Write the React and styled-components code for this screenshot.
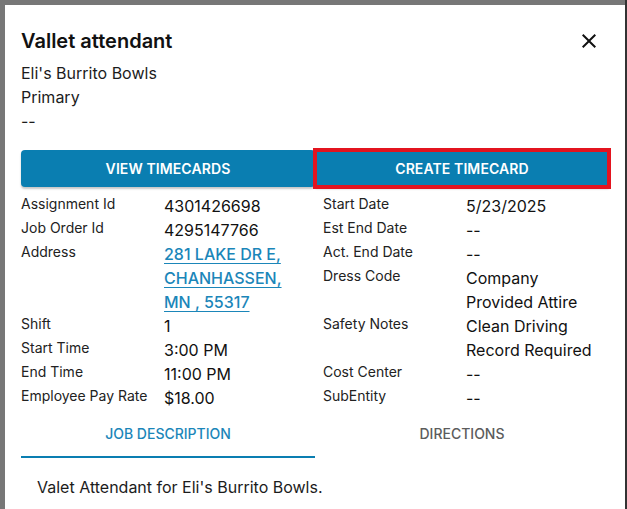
import React, { useState } from 'react';
import styled, { createGlobalStyle } from 'styled-components';

const GlobalStyle = createGlobalStyle`
  html, body {
    margin: 0;
    padding: 0;
    background: #777777;
    font-family: Inter, "Noto Sans", sans-serif;
    overflow: hidden;
  }
  * { box-sizing: border-box; }
`;

const Backdrop = styled.div`
  display: flex;
  height: 509px;
  padding: 5px 0 0 5px;
  background: #777777;
  overflow: hidden;
`;

const Dialog = styled.div`
  width: 620px;
  flex-shrink: 0;
  background: #fff;
  padding: 24px 16px 0 16px;
  color: #1c1c1c;
`;

const Edge = styled.div`
  flex: 1;
  background: #333;
  margin-top: -5px;
`;

const Header = styled.div`
  display: flex;
  align-items: center;
  justify-content: space-between;
`;

const Title = styled.h2`
  margin: 0;
  font-size: 20px;
  line-height: 24px;
  font-weight: 600;
  color: #111;
`;

const CloseButton = styled.button`
  display: flex;
  align-items: center;
  justify-content: center;
  width: 40px;
  height: 40px;
  margin: -8px 0;
  padding: 0;
  border: none;
  background: transparent;
  cursor: pointer;
  color: #111;
`;

const SubtitleGroup = styled.div`
  margin-top: 8px;
`;

const Subtitle = styled.div`
  font-size: 16px;
  line-height: 24px;
  color: #1c1c1c;
`;

const Actions = styled.div`
  display: grid;
  grid-template-columns: 1fr 1fr;
  margin-top: 17px;
`;

const ActionButton = styled.button`
  height: 37px;
  border: none;
  border-radius: ${({ $focused }) => ($focused ? '0' : '4px')};
  background: #0a7eb1;
  color: #fff;
  font-family: Inter, "Noto Sans", sans-serif;
  font-size: 14px;
  font-weight: 600;
  letter-spacing: 0.1px;
  text-transform: uppercase;
  box-shadow: 0 2px 2px rgba(0, 0, 0, 0.22);
  outline: ${({ $focused }) => ($focused ? '4px solid #e3141f' : 'none')};
  outline-offset: -2px;
  position: relative;
  cursor: pointer;
`;

const Details = styled.div`
  display: grid;
  grid-template-columns: 302px 1fr;
  margin-top: 7px;
`;

const Column = styled.div`
  display: flex;
  flex-direction: column;
`;

const Row = styled.div`
  display: grid;
  grid-template-columns: 143px 1fr;
  align-items: start;
`;

const Label = styled.div`
  font-size: 14px;
  line-height: 20px;
  color: #222;
`;

const Value = styled.div`
  font-size: 16px;
  line-height: 24px;
  color: #111;
`;

const AddressLink = styled.a`
  color: #1b86b9;
  text-decoration: underline;
  text-underline-offset: 3px;
  text-decoration-thickness: 1px;
  font-weight: 500;
  display: block;
  width: 130px;
`;

const TabBar = styled.div`
  display: grid;
  grid-template-columns: 1fr 1fr;
`;

const Tab = styled.button`
  height: 48px;
  border: none;
  background: transparent;
  font-family: Inter, "Noto Sans", sans-serif;
  font-size: 14px;
  font-weight: 500;
  text-transform: uppercase;
  color: ${({ $active }) => ($active ? '#1b86b9' : '#5c5c5c')};
  border-bottom: 2px solid ${({ $active }) => ($active ? '#0a7eb1' : 'transparent')};
  cursor: pointer;
`;

const Panel = styled.div`
  padding: 17px 16px;
  font-size: 16px;
  line-height: 24px;
  color: #1c1c1c;
`;

const CloseIcon = () => (
  <svg width="24" height="24" viewBox="0 0 24 24" fill="currentColor">
    <path d="M19 6.41 17.59 5 12 10.59 6.41 5 5 6.41 10.59 12 5 17.59 6.41 19 12 13.41 17.59 19 19 17.59 13.41 12z" />
  </svg>
);

const leftRows = [
  ['Assignment Id', '4301426698'],
  ['Job Order Id', '4295147766'],
  ['Address', 'address'],
  ['Shift', '1'],
  ['Start Time', '3:00 PM'],
  ['End Time', '11:00 PM'],
  ['Employee Pay Rate', '$18.00'],
];

const rightRows = [
  ['Start Date', '5/23/2025'],
  ['Est End Date', '--'],
  ['Act. End Date', '--'],
  ['Dress Code', <>Company<br />Provided Attire</>],
  ['Safety Notes', <>Clean Driving<br />Record Required</>],
  ['Cost Center', '--'],
  ['SubEntity', '--'],
];

export default function App() {
  const [tab, setTab] = useState(0);

  const renderValue = (v) =>
    v === 'address' ? (
      <AddressLink href="#">281 LAKE DR E, CHANHASSEN, MN , 55317</AddressLink>
    ) : (
      v
    );

  return (
    <>
      <GlobalStyle />
      <Backdrop>
        <Dialog>
          <Header>
            <Title>Vallet attendant</Title>
            <CloseButton aria-label="close">
              <CloseIcon />
            </CloseButton>
          </Header>
          <SubtitleGroup>
            <Subtitle>Eli's Burrito Bowls</Subtitle>
            <Subtitle>Primary</Subtitle>
            <Subtitle>--</Subtitle>
          </SubtitleGroup>

          <Actions>
            <ActionButton>View Timecards</ActionButton>
            <ActionButton $focused>Create Timecard</ActionButton>
          </Actions>

          <Details>
            <Column>
              {leftRows.map(([l, v]) => (
                <Row key={l}>
                  <Label>{l}</Label>
                  <Value>{renderValue(v)}</Value>
                </Row>
              ))}
            </Column>
            <Column>
              {rightRows.map(([l, v]) => (
                <Row key={l}>
                  <Label>{l}</Label>
                  <Value>{v}</Value>
                </Row>
              ))}
            </Column>
          </Details>

          <TabBar>
            <Tab $active={tab === 0} onClick={() => setTab(0)}>Job Description</Tab>
            <Tab $active={tab === 1} onClick={() => setTab(1)}>Directions</Tab>
          </TabBar>
          <Panel>
            {tab === 0 ? "Valet Attendant for Eli's Burrito Bowls." : ''}
          </Panel>
        </Dialog>
        <Edge />
      </Backdrop>
    </>
  );
}
